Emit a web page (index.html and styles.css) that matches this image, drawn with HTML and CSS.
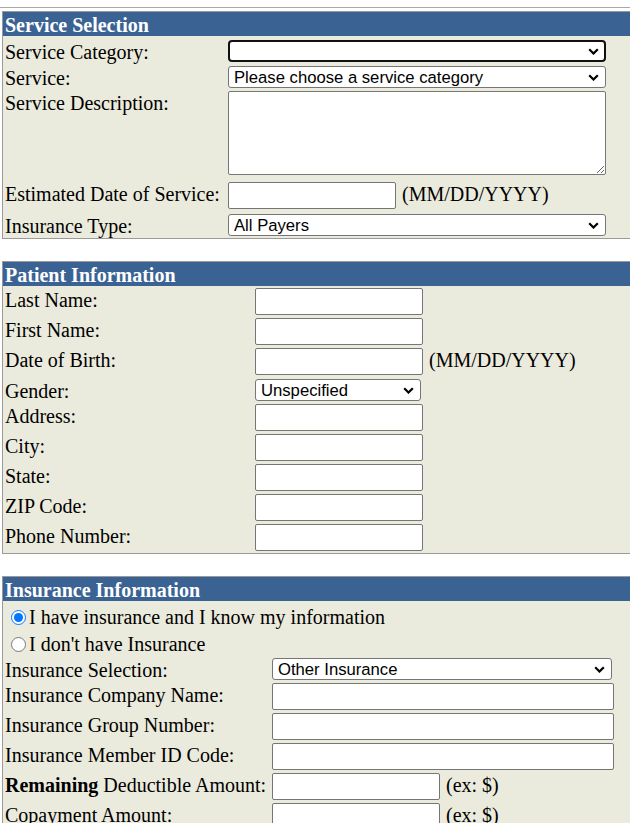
FILE: index.html
```html
<!DOCTYPE html>
<html>
<head>
<meta charset="utf-8">
<title>Service Request</title>
<link rel="stylesheet" href="styles.css">
</head>
<body>
<div class="topline"></div>

<section class="panel p1">
  <div class="head">Service Selection</div>
  <div class="row mt4"><div class="lbl">Service Category:</div><div class="ctl"><span class="selwrap"><select class="sel wide focus"><option></option></select><svg class="chev" width="11" height="7" viewBox="0 0 11 7"><path d="M1.2 1.2 L5.5 5.5 L9.8 1.2" fill="none" stroke="#000" stroke-width="2.2"/></svg></span></div></div>
  <div class="row mt4"><div class="lbl">Service:</div><div class="ctl"><span class="selwrap"><select class="sel wide"><option>Please choose a service category</option></select><svg class="chev" width="11" height="7" viewBox="0 0 11 7"><path d="M1.2 1.2 L5.5 5.5 L9.8 1.2" fill="none" stroke="#000" stroke-width="2.2"/></svg></span></div></div>
  <div class="row mt3"><div class="lbl">Service Description:</div><div class="ctl"><textarea class="area"></textarea></div></div>
  <div class="row mt7"><div class="lbl">Estimated Date of Service:</div><div class="ctl"><input class="inp short" type="text"> <span class="hint">(MM/DD/YYYY)</span></div></div>
  <div class="row mt5 last"><div class="lbl">Insurance Type:</div><div class="ctl"><span class="selwrap"><select class="sel wide"><option>All Payers</option></select><svg class="chev" width="11" height="7" viewBox="0 0 11 7"><path d="M1.2 1.2 L5.5 5.5 L9.8 1.2" fill="none" stroke="#000" stroke-width="2.2"/></svg></span></div></div>
</section>

<section class="panel p2">
  <div class="head">Patient Information</div>
  <div class="row mt2"><div class="lbl">Last Name:</div><div class="ctl"><input class="inp short" type="text"></div></div>
  <div class="row mt3"><div class="lbl">First Name:</div><div class="ctl"><input class="inp short" type="text"></div></div>
  <div class="row mt3"><div class="lbl">Date of Birth:</div><div class="ctl"><input class="inp short" type="text"> <span class="hint">(MM/DD/YYYY)</span></div></div>
  <div class="row mt4"><div class="lbl">Gender:</div><div class="ctl"><span class="selwrap"><select class="sel gender"><option>Unspecified</option></select><svg class="chev" width="11" height="7" viewBox="0 0 11 7"><path d="M1.2 1.2 L5.5 5.5 L9.8 1.2" fill="none" stroke="#000" stroke-width="2.2"/></svg></span></div></div>
  <div class="row mt3"><div class="lbl">Address:</div><div class="ctl"><input class="inp short" type="text"></div></div>
  <div class="row mt3"><div class="lbl">City:</div><div class="ctl"><input class="inp short" type="text"></div></div>
  <div class="row mt3"><div class="lbl">State:</div><div class="ctl"><input class="inp short" type="text"></div></div>
  <div class="row mt3"><div class="lbl">ZIP Code:</div><div class="ctl"><input class="inp short" type="text"></div></div>
  <div class="row mt3 last"><div class="lbl">Phone Number:</div><div class="ctl"><input class="inp short" type="text"></div></div>
</section>

<section class="panel p3">
  <div class="head">Insurance Information</div>
  <div class="radiorow mt4"><label><input class="rad" type="radio" name="ins" checked>I have insurance and I know my information</label></div>
  <div class="radiorow mt5"><label><input class="rad" type="radio" name="ins">I don't have Insurance</label></div>
  <div class="row mt4"><div class="lbl">Insurance Selection:</div><div class="ctl"><span class="selwrap"><select class="sel ins"><option>Other Insurance</option></select><svg class="chev" width="11" height="7" viewBox="0 0 11 7"><path d="M1.2 1.2 L5.5 5.5 L9.8 1.2" fill="none" stroke="#000" stroke-width="2.2"/></svg></span></div></div>
  <div class="row mt3"><div class="lbl">Insurance Company Name:</div><div class="ctl"><input class="inp long" type="text"></div></div>
  <div class="row mt3"><div class="lbl">Insurance Group Number:</div><div class="ctl"><input class="inp long" type="text"></div></div>
  <div class="row mt3"><div class="lbl">Insurance Member ID Code:</div><div class="ctl"><input class="inp long" type="text"></div></div>
  <div class="row mt3"><div class="lbl"><b>Remaining</b> Deductible Amount:</div><div class="ctl"><input class="inp short" type="text"> <span class="hint">(ex: $)</span></div></div>
  <div class="row mt3 last"><div class="lbl">Copayment Amount:</div><div class="ctl"><input class="inp short" type="text"> <span class="hint">(ex: $)</span></div></div>
</section>
</body>
</html>
```

FILE: styles.css
```css
html, body {
  margin: 0;
  padding: 0;
  background: #ffffff;
  overflow: hidden;
}

body {
  font-family: "Liberation Serif", "Times New Roman", serif;
  font-size: 20px;
  color: #000;
}

.topline {
  height: 7px;
  border-bottom: 1px solid #a8a8a8;
}

.panel {
  margin: 3px 0 0 2px;
  border: 1px solid #9a9a9a;
  border-right: none;
  background: #ebebdd;
  padding-bottom: 2px;
}

.p2, .p3 {
  margin-top: 22px;
}

.head {
  background: #3a6394;
  color: #fff;
  font-weight: bold;
  height: 22px;
  line-height: 22px;
  padding: 2px 0 0 2px;
}

.row {
  display: flex;
  align-items: flex-start;
}

.mt2 { margin-top: 2px; }
.mt3 { margin-top: 3px; }
.mt4 { margin-top: 4px; }
.mt5 { margin-top: 5px; }
.mt7 { margin-top: 7px; }

.lbl {
  height: 21px;
  line-height: 22px;
  padding-left: 2px;
  padding-top: 1px;
  flex: 0 0 auto;
  white-space: nowrap;
}

.p1 .lbl { width: 223px; }
.p2 .lbl { width: 250px; }
.p3 .lbl { width: 267px; }

.ctl {
  flex: 1 1 auto;
  line-height: 22px;
  white-space: nowrap;
}

.selwrap {
  position: relative;
  display: inline-block;
  vertical-align: top;
  height: 22px;
}

.chev {
  position: absolute;
  right: 7px;
  top: 8px;
  pointer-events: none;
}

.sel {
  -webkit-appearance: none;
  appearance: none;
  box-sizing: border-box;
  height: 22px;
  font-family: "Liberation Sans", Arial, sans-serif;
  font-size: 16.67px;
  color: #000;
  background-color: #fff;
  border: 1px solid #767676;
  border-radius: 3px;
  padding: 0 24px 0 5px;
  margin: 0;
  display: block;
}

.wide { width: 378px; }
.gender { width: 166px; }
.ins { width: 340px; }

.focus {
  border: 2px solid #101010;
  border-radius: 4px;
}

.area {
  box-sizing: border-box;
  width: 378px;
  height: 84px;
  border: 1px solid #767676;
  border-radius: 2px;
  background: #fff;
  display: block;
  margin: 0;
}

.inp {
  box-sizing: border-box;
  height: 27px;
  border: 1px solid #767676;
  border-radius: 2px;
  background: #fff;
  font-family: "Liberation Sans", Arial, sans-serif;
  font-size: 16.67px;
  padding: 1px 3px;
  margin: 0;
  vertical-align: baseline;
}

.short { width: 168px; }
.long { width: 342px; }

.hint {
  font-size: 20px;
  margin-left: 1px;
}

.radiorow {
  height: 21px;
  line-height: 22px;
  padding-left: 2px;
  padding-top: 1px;
}

.rad {
  width: 15px;
  height: 15px;
  margin: 0 3px 0 6px;
  vertical-align: -1px;
}
```
